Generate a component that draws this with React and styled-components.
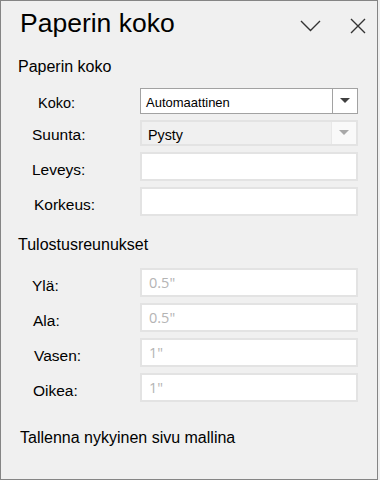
import React from "react";
import styled, { createGlobalStyle } from "styled-components";

const Global = createGlobalStyle`
  html, body { margin: 0; padding: 0; background: #f0f0f0; }
  * { box-sizing: border-box; }
`;

const Panel = styled.div`
  width: 378px;
  height: 480px;
  border: 1.5px solid #858585;
  background: #f0f0f0;
  font-family: "Liberation Sans", Arial, sans-serif;
  color: #000;
  display: flex;
  flex-direction: column;
`;

const Header = styled.div`
  display: flex;
  align-items: flex-start;
  padding: 7px 0 0 19px;
  height: 50px;
`;

const Title = styled.h1`
  margin: 0;
  font-size: 26.5px;
  font-weight: 400;
  line-height: 30px;
  flex: 1;
`;

const IconButton = styled.button`
  border: none;
  background: transparent;
  padding: 0;
  margin: ${(p) => p.$m};
  display: flex;
  color: #333;
`;

const Section = styled.div`
  display: flex;
  flex-direction: column;
  padding: 0 20px 0 17px;
  margin-top: ${(p) => p.$top}px;
`;

const SectionTitle = styled.div`
  font-size: 16px;
  line-height: 20px;
  margin-bottom: ${(p) => p.$gap}px;
`;

const Rows = styled.div`
  display: flex;
  flex-direction: column;
  gap: 6px;
`;

const Row = styled.div`
  display: grid;
  grid-template-columns: 122px 218px;
  align-items: center;
  height: ${(p) => p.$h}px;
`;

const Label = styled.label`
  font-size: ${(p) => p.$size || 15.5}px;
  padding-left: ${(p) => p.$indent}px;
  padding-top: ${(p) => p.$drop || 6}px;
  white-space: nowrap;
`;

const TextBox = styled.div`
  height: 29px;
  background: #fff;
  border: 2px solid #e3e3e3;
  padding: 0 0 0 7px;
  display: flex;
  align-items: center;
  font-family: "Open Sans", "Noto Sans", sans-serif;
  font-size: 14.5px;
  color: #b4b4b4;
`;

const Select = styled.div`
  height: 26px;
  display: flex;
  background: ${(p) => (p.$disabled ? "#f0f0f0" : "#fff")};
  border: ${(p) => (p.$disabled ? "2px solid #e3e3e3" : "1.5px solid #a2a2a2")};
`;

const SelectValue = styled.div`
  flex: 1;
  display: flex;
  align-items: center;
  padding-left: ${(p) => (p.$disabled ? 6 : 5)}px;
  padding-top: 3px;
  font-size: ${(p) => (p.$disabled ? 14.3 : 13)}px;
  color: #000;
`;

const Arrow = styled.div`
  width: 25px;
  display: flex;
  align-items: center;
  justify-content: center;
  border-left: ${(p) => (p.$disabled ? "1.5px solid #e8e8e8" : "1.5px solid #a2a2a2")};
  background: ${(p) => (p.$disabled ? "#f9f9f9" : "#fff")};
  padding-bottom: 2px;
`;

const Triangle = styled.span`
  width: 0;
  height: 0;
  border-left: 5px solid transparent;
  border-right: 5px solid transparent;
  border-top: 5px solid ${(p) => (p.$disabled ? "#a8a8a8" : "#404040")};
`;

const SaveLink = styled.div`
  margin-top: 26px;
  padding-left: 19px;
  font-size: 16px;
  line-height: 20px;
`;

function Dropdown({ value, disabled }) {
  return (
    <Select $disabled={disabled}>
      <SelectValue $disabled={disabled}>{value}</SelectValue>
      <Arrow $disabled={disabled}>
        <Triangle $disabled={disabled} />
      </Arrow>
    </Select>
  );
}

const sizeRows = [
  { label: "Leveys:", indent: 14 },
  { label: "Korkeus:", indent: 16 },
];

const marginRows = [
  { label: "Ylä:", indent: 14, value: "0.5\"" },
  { label: "Ala:", indent: 15, value: "0.5\"" },
  { label: "Vasen:", indent: 16, value: "1\"" },
  { label: "Oikea:", indent: 15, value: "1\"" },
];

export default function App() {
  return (
    <>
      <Global />
      <Panel>
        <Header>
          <Title>Paperin koko</Title>
          <IconButton $m="12px 29px 0 0" aria-label="Kutista">
            <svg width="21" height="12" viewBox="0 0 21 12">
              <path d="M1 1 L10.5 10.5 L20 1" fill="none" stroke="#333" strokeWidth="1.4" />
            </svg>
          </IconButton>
          <IconButton $m="10px 11px 0 0" aria-label="Sulje">
            <svg width="16" height="16" viewBox="0 0 16 16">
              <path d="M1 1 L15 15 M15 1 L1 15" fill="none" stroke="#333" strokeWidth="1.4" />
            </svg>
          </IconButton>
        </Header>

        <Section $top={6}>
          <SectionTitle $gap={11}>Paperin koko</SectionTitle>
          <Rows>
            <Row $h={26}>
              <Label $indent={20} $size={14.5} $drop={4}>Koko:</Label>
              <Dropdown value="Automaattinen" />
            </Row>
            <Row $h={26}>
              <Label $indent={14} $drop={4}>Suunta:</Label>
              <Dropdown value="Pysty" disabled />
            </Row>
            {sizeRows.map((r) => (
              <Row $h={29} key={r.label}>
                <Label $indent={r.indent}>{r.label}</Label>
                <TextBox />
              </Row>
            ))}
          </Rows>
        </Section>

        <Section $top={19}>
          <SectionTitle $gap={13}>Tulostusreunukset</SectionTitle>
          <Rows>
            {marginRows.map((r) => (
              <Row $h={29} key={r.label}>
                <Label $indent={r.indent}>{r.label}</Label>
                <TextBox>{r.value}</TextBox>
              </Row>
            ))}
          </Rows>
        </Section>

        <SaveLink>Tallenna nykyinen sivu mallina</SaveLink>
      </Panel>
    </>
  );
}
